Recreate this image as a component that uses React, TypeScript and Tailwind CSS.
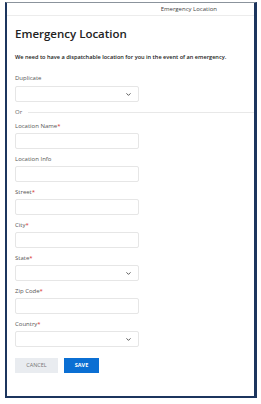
import { ChevronDown } from 'lucide-react'

type Field = { label: string; required?: boolean; select?: boolean }

const fields: Field[] = [
  { label: 'Location Name', required: true },
  { label: 'Location Info' },
  { label: 'Street', required: true },
  { label: 'City', required: true },
  { label: 'State', required: true, select: true },
  { label: 'Zip Code', required: true },
  { label: 'Country', required: true, select: true },
]

function Box({ select }: { select?: boolean }) {
  return (
    <div className="flex h-[16px] w-[124px] items-center justify-end rounded-[2px] border border-[#e6e6e6] bg-white pr-[6px]">
      {select && <ChevronDown className="h-[7px] w-[7px] text-[#444]" strokeWidth={3} />}
    </div>
  )
}

function Label({ text, required }: { text: string; required?: boolean }) {
  return (
    <div className="text-[6px] leading-[8px] text-[#555]">
      {text}
      {required && <span className="text-[#d9302c]">*</span>}
    </div>
  )
}

export default function App() {
  return (
    <div
      className="h-[404px] w-[261px] bg-white pb-[6px] pl-[5px] pr-[4px] pt-[2px]"
      style={{ fontFamily: '"Open Sans", "Liberation Sans", sans-serif' }}
    >
      <div className="flex h-full flex-col border-b-2 border-l-2 border-r-[3px] border-t border-[#1c355e] border-t-[#8b939c]">
        <div className="flex h-[13px] items-center justify-end border-b border-[#ececec] pr-[37px] text-[6px] text-[#444]">
          Emergency Location
        </div>
        <div className="flex flex-col pl-[8px] pt-[11px]">
          <h1 className="text-[11.5px] font-semibold leading-[14px] text-[#222]">Emergency Location</h1>
          <p className="mt-[12px] text-[5.6px] font-semibold leading-[8px] text-[#222]">
            We need to have a dispatchable location for you in the event of an emergency.
          </p>
          <div className="mt-[13px] flex flex-col gap-[4px]">
            <Label text="Duplicate" />
            <Box select />
          </div>
          <div className="mt-[6px] flex items-center gap-[6px]">
            <span className="text-[6px] leading-[8px] text-[#666]">Or</span>
            <div className="h-px flex-1 bg-[#e8e8e8]" />
          </div>
          <div className="mt-[6px] flex flex-col gap-[6px]">
            {fields.map((f) => (
              <div key={f.label} className="flex flex-col gap-[3px]">
                <Label text={f.label} required={f.required} />
                <Box select={f.select} />
              </div>
            ))}
          </div>
          <div className="mt-[11px] flex gap-[6px]">
            <button className="flex h-[15px] w-[43px] items-center justify-center bg-[#e9ecf0] text-[5.5px] text-[#777]">
              CANCEL
            </button>
            <button className="flex h-[15px] w-[35px] items-center justify-center bg-[#0b6fd3] text-[5.5px] font-bold text-white">
              SAVE
            </button>
          </div>
        </div>
      </div>
    </div>
  )
}
